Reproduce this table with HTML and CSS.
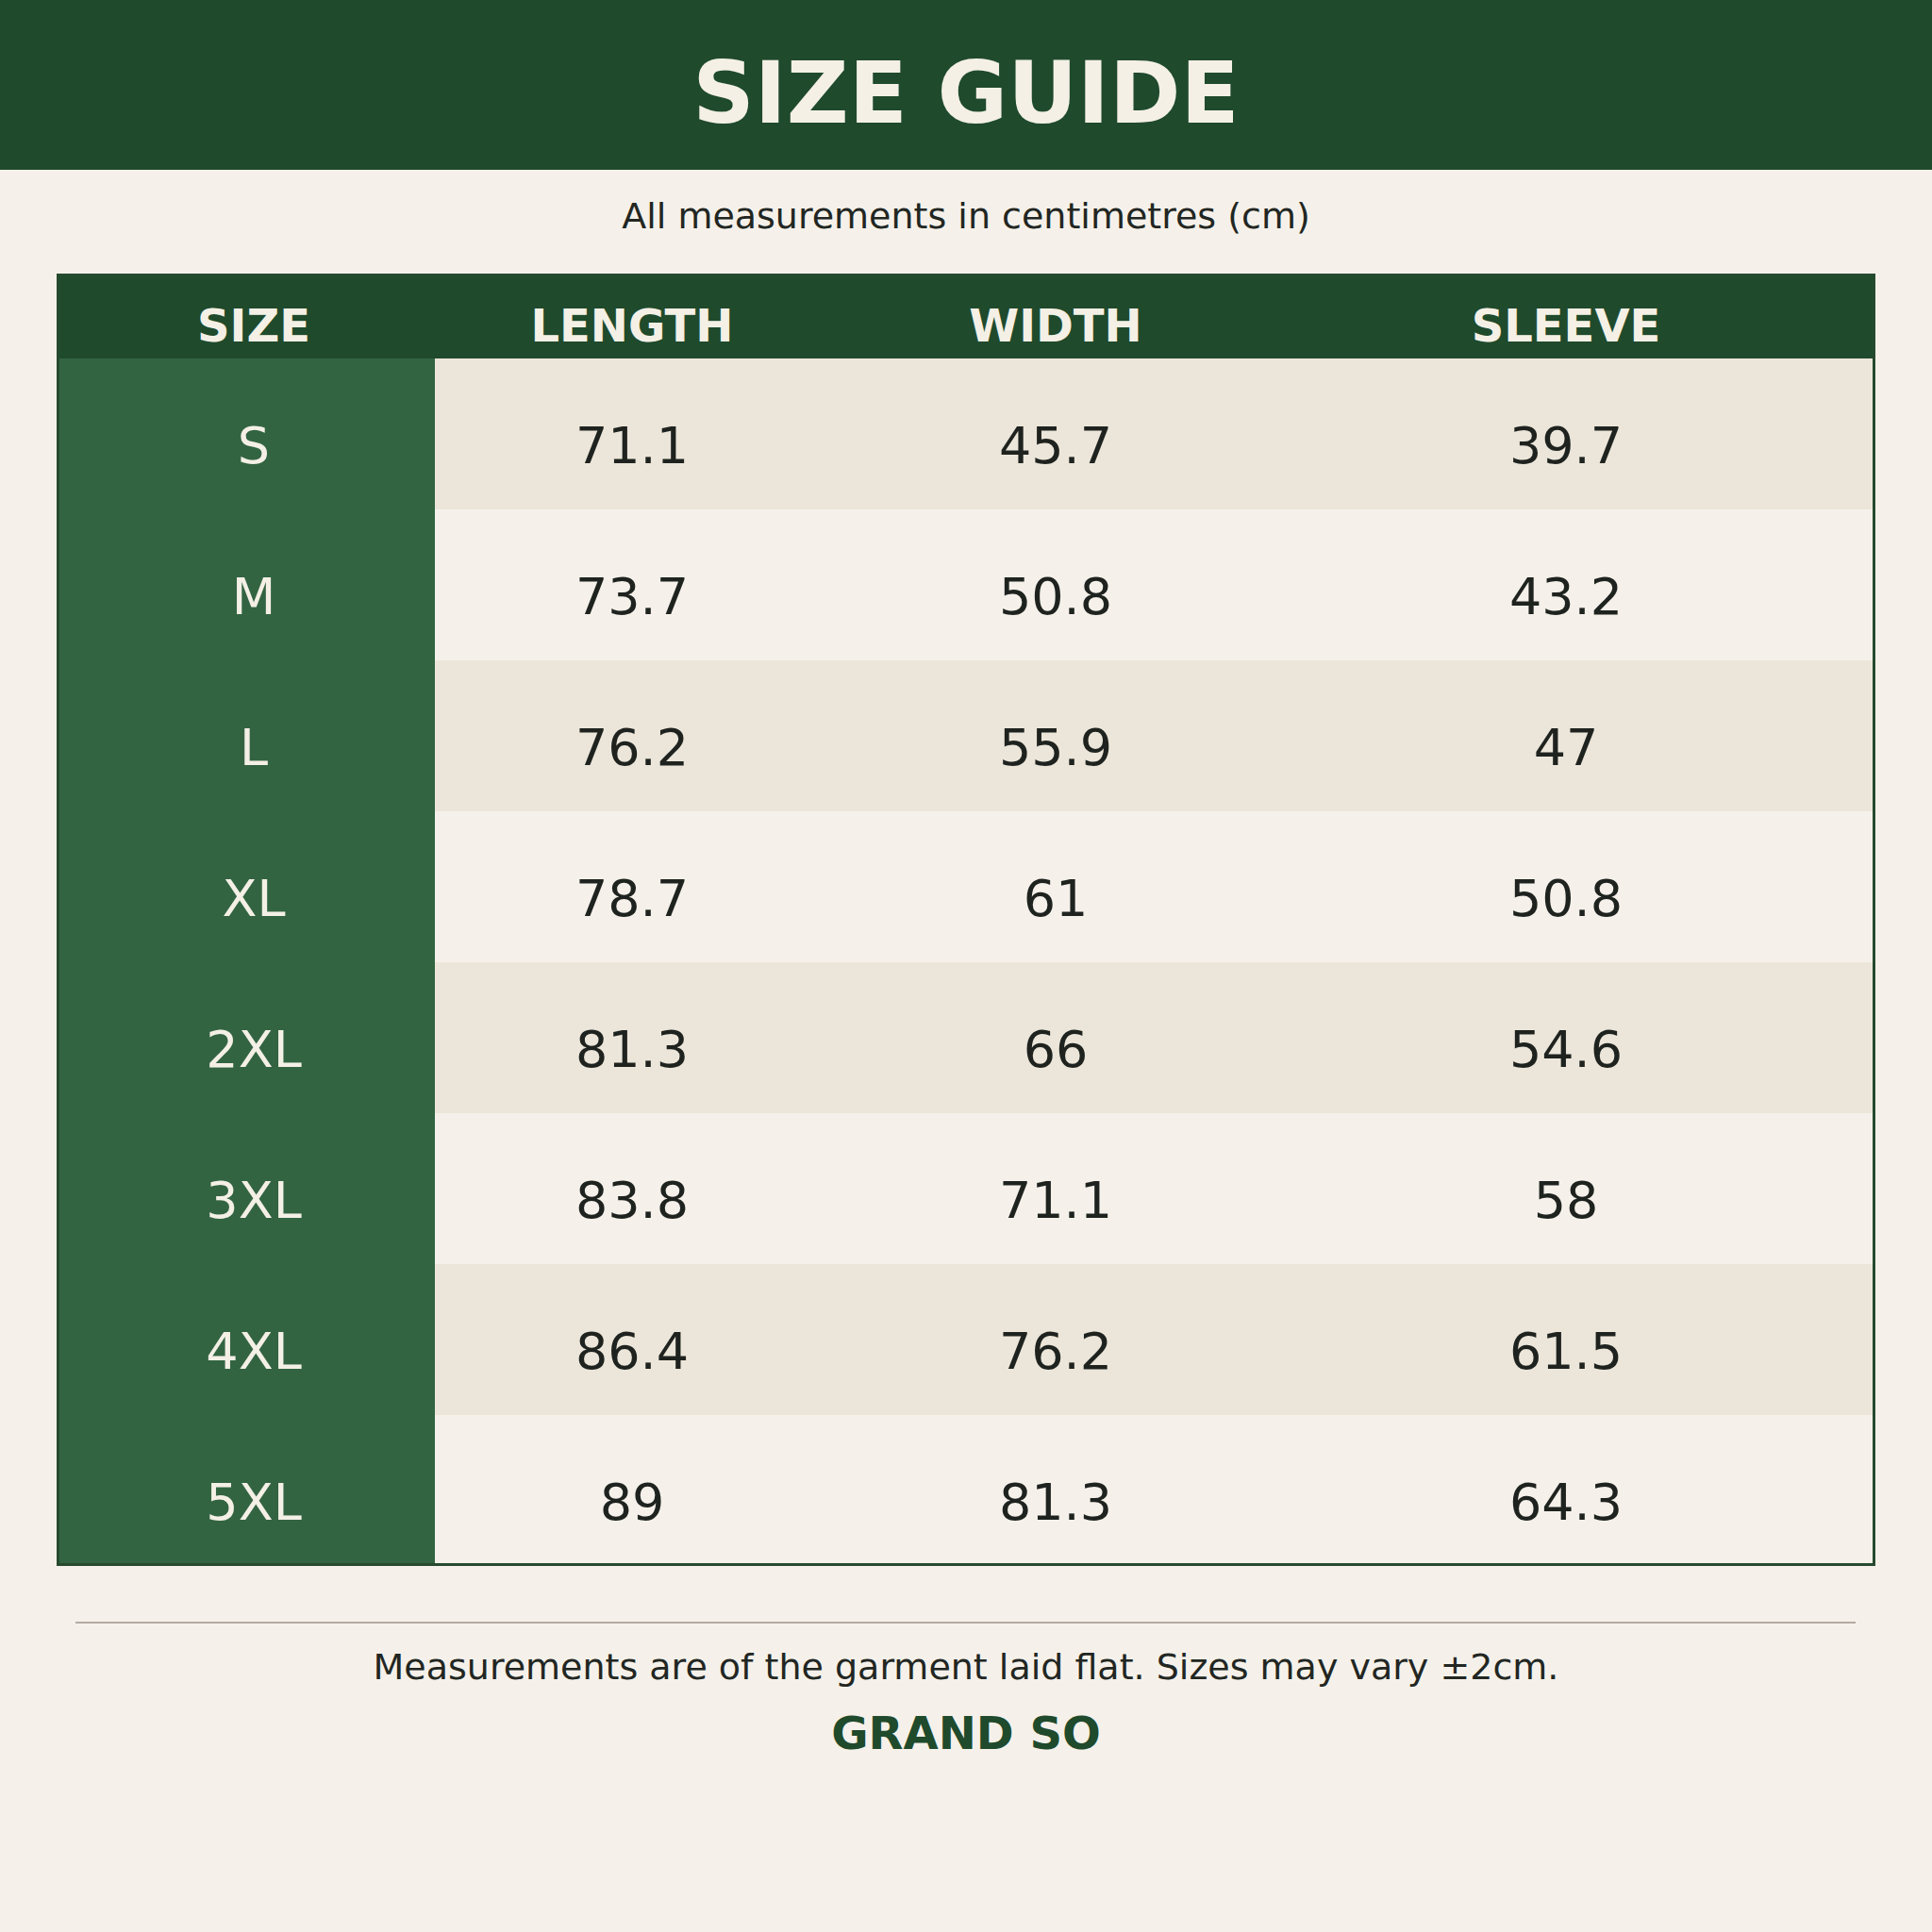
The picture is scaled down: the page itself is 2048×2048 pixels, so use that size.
FILE: index.html
```html
<!DOCTYPE html>
<html>
<head>
<meta charset="utf-8">
<link rel="stylesheet" href="styles.css">
</head>
<body>
<header class="banner"><h1 class="title">SIZE GUIDE</h1></header>
<p class="subtitle">All measurements in centimetres (cm)</p>
<div class="chart">
  <div class="th first">SIZE</div><div class="th">LENGTH</div><div class="th">WIDTH</div><div class="th last">SLEEVE</div>

  <div class="sz">S</div><div class="td alt">71.1</div><div class="td alt">45.7</div><div class="td alt last">39.7</div>
  <div class="sz">M</div><div class="td">73.7</div><div class="td">50.8</div><div class="td last">43.2</div>
  <div class="sz">L</div><div class="td alt">76.2</div><div class="td alt">55.9</div><div class="td alt last">47</div>
  <div class="sz">XL</div><div class="td">78.7</div><div class="td">61</div><div class="td last">50.8</div>
  <div class="sz">2XL</div><div class="td alt">81.3</div><div class="td alt">66</div><div class="td alt last">54.6</div>
  <div class="sz">3XL</div><div class="td">83.8</div><div class="td">71.1</div><div class="td last">58</div>
  <div class="sz">4XL</div><div class="td alt">86.4</div><div class="td alt">76.2</div><div class="td alt last">61.5</div>
  <div class="sz">5XL</div><div class="td">89</div><div class="td">81.3</div><div class="td last">64.3</div>
</div>
<hr class="rule">
<p class="note">Measurements are of the garment laid flat. Sizes may vary ±2cm.</p>
<p class="brand">GRAND SO</p>
</body>
</html>
```
FILE: styles.css
```css
html, body {
  margin: 0;
  padding: 0;
}
body {
  width: 2048px;
  height: 2048px;
  background: #f5f1ea;
  font-family: "DejaVu Sans", Verdana, sans-serif;
  color: #1f231f;
}
.banner {
  box-sizing: border-box;
  height: 180px;
  background: #1f4a2c;
  padding-top: 46px;
  text-align: center;
}
.title {
  margin: 0;
  font-size: 91px;
  font-weight: bold;
  line-height: normal;
  color: #f4f0e6;
}
.subtitle {
  margin: 27px 0 0;
  font-size: 38px;
  line-height: normal;
  text-align: center;
  color: #222622;
  height: 83px;
}
.chart {
  box-sizing: border-box;
  margin-left: 60px;
  width: 1928px;
  border: 3px solid #264a2f;
  display: grid;
  grid-template-columns: 398px 418px 480px 1fr;
  grid-template-rows: 87px repeat(7, 160px) 157px;
}
.th {
  background: #1f4a2c;
  color: #f4f0e6;
  font-weight: bold;
  font-size: 48px;
  line-height: normal;
  text-align: center;
  padding-top: 24px;
}
.th.first, .sz {
  padding-left: 14px;
}
.th.last, .td.last {
  padding-right: 24px;
}
.sz, .td {
  font-size: 54px;
  line-height: normal;
  text-align: center;
  padding-top: 61px;
}
.sz {
  background: #336442;
  color: #f4f0e6;
}
.td {
  background: #f5f1ea;
  color: #1f231f;
}
.td.alt {
  background: #ece6da;
}
.rule {
  margin: 59px 81px 0 80px;
  border: 0;
  height: 2px;
  background: #b3aba2;
}
.note {
  margin: 24px 0 0;
  font-size: 38px;
  line-height: normal;
  text-align: center;
  color: #222622;
}
.brand {
  margin: 20px 0 0;
  font-size: 48px;
  font-weight: bold;
  line-height: normal;
  text-align: center;
  color: #1f4a2c;
}
```
